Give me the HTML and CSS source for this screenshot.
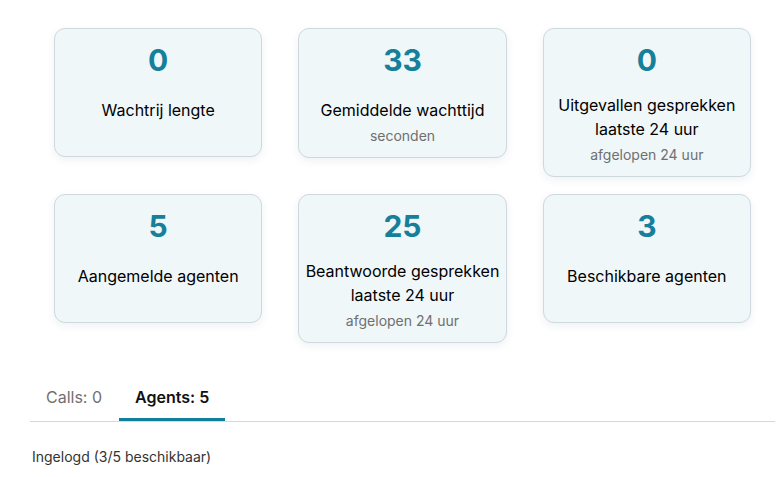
FILE: index.html
```html
<!DOCTYPE html>
<html lang="nl">
<head>
<meta charset="utf-8">
<title>Wachtrij dashboard</title>
<link rel="stylesheet" href="styles.css">
</head>
<body>
<main class="page">
  <section class="stats">
    <div class="card">
      <div class="value">0</div>
      <div class="label">Wachtrij lengte</div>
    </div>
    <div class="card">
      <div class="value">33</div>
      <div class="label">Gemiddelde wachttijd</div>
      <div class="sub">seconden</div>
    </div>
    <div class="card">
      <div class="value">0</div>
      <div class="label label-two">Uitgevallen gesprekken<br>laatste 24 uur</div>
      <div class="sub">afgelopen 24 uur</div>
    </div>
    <div class="card">
      <div class="value">5</div>
      <div class="label">Aangemelde agenten</div>
    </div>
    <div class="card">
      <div class="value">25</div>
      <div class="label label-two">Beantwoorde gesprekken<br>laatste 24 uur</div>
      <div class="sub">afgelopen 24 uur</div>
    </div>
    <div class="card">
      <div class="value">3</div>
      <div class="label">Beschikbare agenten</div>
    </div>
  </section>
  <nav class="tabs">
    <div class="tab">Calls: 0</div>
    <div class="tab tab-active">Agents: 5</div>
  </nav>
  <p class="status">Ingelogd (3/5 beschikbaar)</p>
</main>
</body>
</html>
```
FILE: styles.css
```css
html, body {
  margin: 0;
  padding: 0;
  background: #ffffff;
}
body {
  font-family: Inter, "Noto Sans", "Liberation Sans", sans-serif;
  color: #111111;
}
.page {
  width: 745px;
  margin-left: 30px;
}
.stats {
  display: grid;
  grid-template-columns: repeat(3, 1fr);
  column-gap: 36px;
  row-gap: 17px;
  padding: 28px 24px 0 24px;
  align-items: start;
}
.card {
  box-sizing: border-box;
  min-height: 129px;
  background: #f0f7f9;
  border: 1px solid #cfd8df;
  border-radius: 11px;
  box-shadow: 0 3px 8px rgba(30, 60, 80, 0.07);
  padding: 13px 2px 11px 2px;
  text-align: center;
}
.value {
  font-size: 30px;
  line-height: 36px;
  font-weight: 700;
  color: #16809a;
}
.label {
  margin-top: 20px;
  font-size: 16px;
  line-height: 24px;
  color: #000000;
  white-space: nowrap;
}
.label-two {
  margin-top: 15px;
}
.sub {
  margin-top: 4px;
  font-size: 14px;
  line-height: 20px;
  color: #6f6f6f;
}
.tabs {
  display: flex;
  margin-top: 30px;
  border-bottom: 1px solid #d8d8d8;
}
.tab {
  padding: 12px 16px 9px 16px;
  font-size: 16px;
  line-height: 24px;
  color: #707070;
  border-bottom: 3px solid transparent;
  margin-right: 1px;
}
.tab-active {
  color: #111111;
  font-weight: 600;
  border-bottom-color: #12809a;
}
.status {
  margin: 25px 0 0 2px;
  font-size: 14px;
  line-height: 20px;
  color: #333333;
}
```
